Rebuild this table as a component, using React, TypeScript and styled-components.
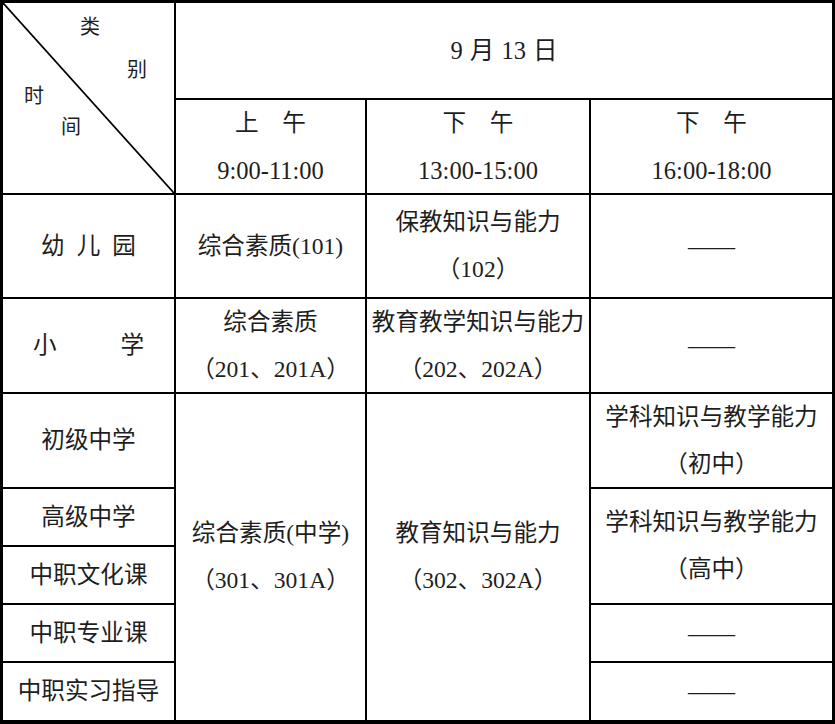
import React from "react";
import styled, { createGlobalStyle } from "styled-components";

const GlobalStyle = createGlobalStyle`
  html, body {
    margin: 0;
    padding: 0;
    background: #ffffff;
  }
  body {
    font-family: "Liberation Serif", "Noto Sans CJK SC", serif;
    color: #1e1e1e;
  }
`;

// 3px frame, 2px rules between cells: the grid gap shows the black background
const Sheet = styled.div`
  display: grid;
  grid-template-columns: 171px 189px 222px 241px;
  grid-template-rows: 95px 93px 102px 93px 93px 56px 56px 56px 57px;
  gap: 2px;
  width: 829px;
  padding: 3px 3px 4px 3px;
  background: #000000;
`;

const Cell = styled.div<{ $cs?: number; $rs?: number }>`
  grid-column: span ${(p) => p.$cs ?? 1};
  grid-row: span ${(p) => p.$rs ?? 1};
  background: #ffffff;
  display: flex;
  flex-direction: column;
  align-items: center;
  justify-content: center;
  font-size: 23.6px;
  line-height: 47px;
  white-space: nowrap;
`;

const Corner = styled(Cell)`
  position: relative;
  display: block;
  overflow: hidden;
`;

const Slash = styled.svg`
  position: absolute;
  inset: 0;
  width: 100%;
  height: 100%;
`;

const CornerLabel = styled.span<{ $x: number; $y: number }>`
  position: absolute;
  left: ${(p) => p.$x}px;
  top: ${(p) => p.$y}px;
  font-size: 20px;
  line-height: 20px;
`;

const Spaced = styled.span<{ $gap: number }>`
  letter-spacing: ${(p) => p.$gap}px;
  margin-right: -${(p) => p.$gap}px;
`;

const DateText = styled.span`
  font-size: 24.5px;
  word-spacing: 1px;
`;

const Time = styled.span`
  font-size: 24.5px;
`;

export default function App() {
  return (
    <>
      <GlobalStyle />
      <Sheet>
        <Corner $rs={2}>
          <Slash viewBox="0 0 100 100" preserveAspectRatio="none">
            <line
              x1="0"
              y1="0"
              x2="100"
              y2="100"
              stroke="#000"
              strokeWidth="1.8"
              vectorEffect="non-scaling-stroke"
            />
          </Slash>
          <CornerLabel $x={77} $y={14}>类</CornerLabel>
          <CornerLabel $x={124} $y={57}>别</CornerLabel>
          <CornerLabel $x={21} $y={83}>时</CornerLabel>
          <CornerLabel $x={58} $y={114}>间</CornerLabel>
        </Corner>
        <Cell $cs={3}>
          <DateText>9 月 13 日</DateText>
        </Cell>

        <Cell>
          <span>上　午</span>
          <Time>9:00-11:00</Time>
        </Cell>
        <Cell>
          <span>下　午</span>
          <Time>13:00-15:00</Time>
        </Cell>
        <Cell>
          <span>下　午</span>
          <Time>16:00-18:00</Time>
        </Cell>

        <Cell>
          <Spaced $gap={12}>幼儿园</Spaced>
        </Cell>
        <Cell>综合素质(101)</Cell>
        <Cell>
          <span>保教知识与能力</span>
          <span>（102）</span>
        </Cell>
        <Cell>——</Cell>

        <Cell>
          <Spaced $gap={64}>小学</Spaced>
        </Cell>
        <Cell>
          <span>综合素质</span>
          <span>（201、201A）</span>
        </Cell>
        <Cell>
          <span>教育教学知识与能力</span>
          <span>（202、202A）</span>
        </Cell>
        <Cell>——</Cell>

        <Cell>初级中学</Cell>
        <Cell $rs={5}>
          <span>综合素质(中学)</span>
          <span>（301、301A）</span>
        </Cell>
        <Cell $rs={5}>
          <span>教育知识与能力</span>
          <span>（302、302A）</span>
        </Cell>
        <Cell>
          <span>学科知识与教学能力</span>
          <span>（初中）</span>
        </Cell>

        <Cell>高级中学</Cell>
        <Cell $rs={2}>
          <span>学科知识与教学能力</span>
          <span>（高中）</span>
        </Cell>

        <Cell>中职文化课</Cell>

        <Cell>中职专业课</Cell>
        <Cell>——</Cell>

        <Cell>中职实习指导</Cell>
        <Cell>——</Cell>
      </Sheet>
    </>
  );
}
